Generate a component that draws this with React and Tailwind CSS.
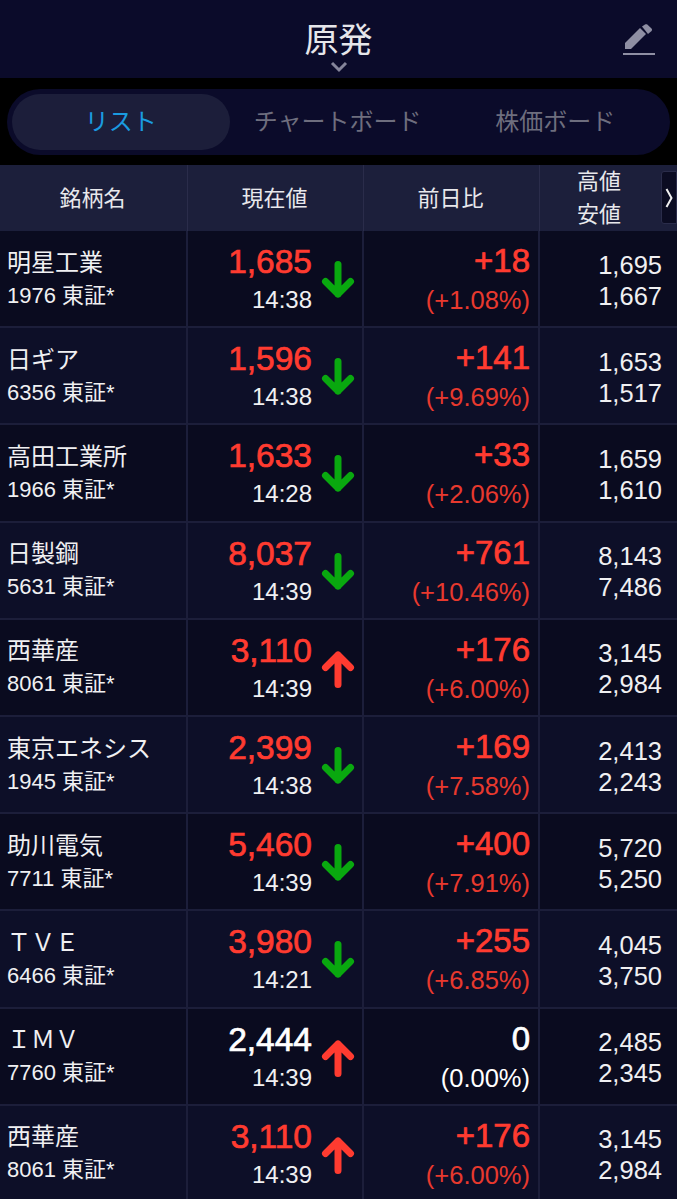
import React from 'react';

const rows = [
    { name: '明星工業', code: '1976 東証*', price: '1,685', time: '14:38', dir: 'down', change: '+18', pct: '(+1.08%)', high: '1,695', low: '1,667' },
    { name: '日ギア', code: '6356 東証*', price: '1,596', time: '14:38', dir: 'down', change: '+141', pct: '(+9.69%)', high: '1,653', low: '1,517' },
    { name: '高田工業所', code: '1966 東証*', price: '1,633', time: '14:28', dir: 'down', change: '+33', pct: '(+2.06%)', high: '1,659', low: '1,610' },
    { name: '日製鋼', code: '5631 東証*', price: '8,037', time: '14:39', dir: 'down', change: '+761', pct: '(+10.46%)', high: '8,143', low: '7,486' },
    { name: '西華産', code: '8061 東証*', price: '3,110', time: '14:39', dir: 'up', change: '+176', pct: '(+6.00%)', high: '3,145', low: '2,984' },
    { name: '東京エネシス', code: '1945 東証*', price: '2,399', time: '14:38', dir: 'down', change: '+169', pct: '(+7.58%)', high: '2,413', low: '2,243' },
    { name: '助川電気', code: '7711 東証*', price: '5,460', time: '14:39', dir: 'down', change: '+400', pct: '(+7.91%)', high: '5,720', low: '5,250' },
    { name: 'ＴＶＥ', code: '6466 東証*', price: '3,980', time: '14:21', dir: 'down', change: '+255', pct: '(+6.85%)', high: '4,045', low: '3,750' },
    { name: 'ＩＭＶ', code: '7760 東証*', price: '2,444', time: '14:39', dir: 'up', change: '0', pct: '(0.00%)', high: '2,485', low: '2,345', flat: true },
    { name: '西華産', code: '8061 東証*', price: '3,110', time: '14:39', dir: 'up', change: '+176', pct: '(+6.00%)', high: '3,145', low: '2,984' },
];

const Arrow = ({ dir }) => (
    <svg width="34" height="38" viewBox="0 0 34 38" fill="none" stroke={dir === 'up' ? '#ff3b30' : '#09a80f'} strokeWidth="7" strokeLinecap="round" strokeLinejoin="round">
        {dir === 'up' ? (
            <path d="M17 34.5V5M4.5 17.5L17 5L29.5 17.5" />
        ) : (
            <path d="M17 3.5V33M4.5 20.5L17 33L29.5 20.5" />
        )}
    </svg>
);

const App = () => {
    return (
        <div className="w-[677px] h-[1199px] overflow-hidden bg-black text-white [font-family:'Liberation_Sans','Noto_Sans_CJK_JP',sans-serif]">
            <div className="relative h-[78px] bg-[#0b0b2a] flex flex-col items-center">
                <div className="text-[34px] leading-[40px] mt-[20px] text-[#e6e6ea]">原発</div>
                <svg className="absolute top-[61px] left-[330px]" width="18" height="12" viewBox="0 0 18 12" fill="none" stroke="#85859a" strokeWidth="3">
                    <path d="M2 2L9 9L16 2" />
                </svg>
                <svg className="absolute top-[24px] left-[622px]" width="34" height="34" viewBox="0 0 34 34" fill="#8f8fa3">
                    <path d="M3 25V19L18 4L24 10L9 25Z" />
                    <path d="M20 2.5L23 0.5C23.8 0 24.6 0 25.3 0.6L29.5 4.6C30.2 5.3 30.2 6.2 29.6 7L26 10Z" />
                    <rect x="1" y="29" width="32" height="2" />
                </svg>
            </div>

            <div className="h-[87px] flex items-center px-[7px]">
                <div className="w-[663px] h-[66px] rounded-[33px] bg-[#0b0b2a] flex items-center p-[5px] text-[24px]">
                    <div className="w-[218px] h-[56px] rounded-[28px] bg-[#1c1e3a] flex items-center justify-center text-[#1a9be0]">リスト</div>
                    <div className="w-[216px] text-center text-[#6e6e7e]">チャートボード</div>
                    <div className="w-[220px] text-center text-[#6e6e7e]">株価ボード</div>
                </div>
            </div>

            <div className="relative h-[66px] bg-[#1c1f3b] grid grid-cols-[188px_176px_176px_137px] text-[22px] text-[#e8e8ec] text-center">
                <div className="flex items-center justify-center border-r border-[#2a2c4a] pr-[2px]">銘柄名</div>
                <div className="flex items-center justify-center border-r border-[#2a2c4a] pr-[2px]">現在値</div>
                <div className="flex items-center justify-center border-r border-[#2a2c4a] pr-[2px]">前日比</div>
                <div className="flex flex-col justify-center pr-[19px] leading-[33px]">
                    <span>高値</span>
                    <span>安値</span>
                </div>
                <div className="absolute top-[6px] right-0 w-[16px] h-[53px] bg-[#0b0c22] border border-[#2a2c4a] rounded-l-[3px] flex items-center justify-center">
                    <svg width="8" height="20" viewBox="0 0 8 20" fill="none" stroke="#f0f0f0" strokeWidth="2">
                        <path d="M1.5 1L6.5 10L1.5 19" />
                    </svg>
                </div>
            </div>

            {rows.map((row, i) => (
                <div
                    key={i}
                    className={`h-[97.2px] grid grid-cols-[188px_176px_176px_137px] border-b-2 border-[#1c1e3a] ${i % 2 === 0 ? 'bg-[#0a0b1f]' : 'bg-[#0d0f28]'}`}
                >
                    <div className="flex flex-col justify-center pl-[7px] border-r-2 border-[#1c1e3a] whitespace-nowrap">
                        <div className="text-[24px] leading-[34px] text-[#f0f0f2]">{row.name}</div>
                        <div className="text-[22px] leading-[32px] text-[#f0f0f2]">{row.code}</div>
                    </div>
                    <div className="flex border-r-2 border-[#1c1e3a]">
                        <div className="w-[124px] flex flex-col justify-center items-end pt-[5px]">
                            <div className={`text-[33.5px] leading-[38px] [-webkit-text-stroke:0.7px] ${row.flat ? 'text-white' : 'text-[#ff3b30]'}`}>{row.price}</div>
                            <div className="text-[24px] leading-[38px] text-[#f0f0f2]">{row.time}</div>
                        </div>
                        <div className="flex-1 flex justify-center pt-[30px] pl-[1px]">
                            <Arrow dir={row.dir} />
                        </div>
                    </div>
                    <div className="flex flex-col justify-center items-end pr-[8px] pt-[5px] border-r-2 border-[#1c1e3a]">
                        <div className={`text-[33px] leading-[38px] [-webkit-text-stroke:0.7px] ${row.flat ? 'text-white' : 'text-[#ff3b30]'}`}>{row.change}</div>
                        <div className={`text-[25.5px] leading-[40px] ${row.flat ? 'text-white' : 'text-[#e8392e]'}`}>{row.pct}</div>
                    </div>
                    <div className="flex flex-col justify-center items-end pr-[15px] pt-[4px] text-[25.5px] leading-[31px] text-[#f0f0f2]">
                        <div>{row.high}</div>
                        <div>{row.low}</div>
                    </div>
                </div>
            ))}
        </div>
    );
};

export default App;
